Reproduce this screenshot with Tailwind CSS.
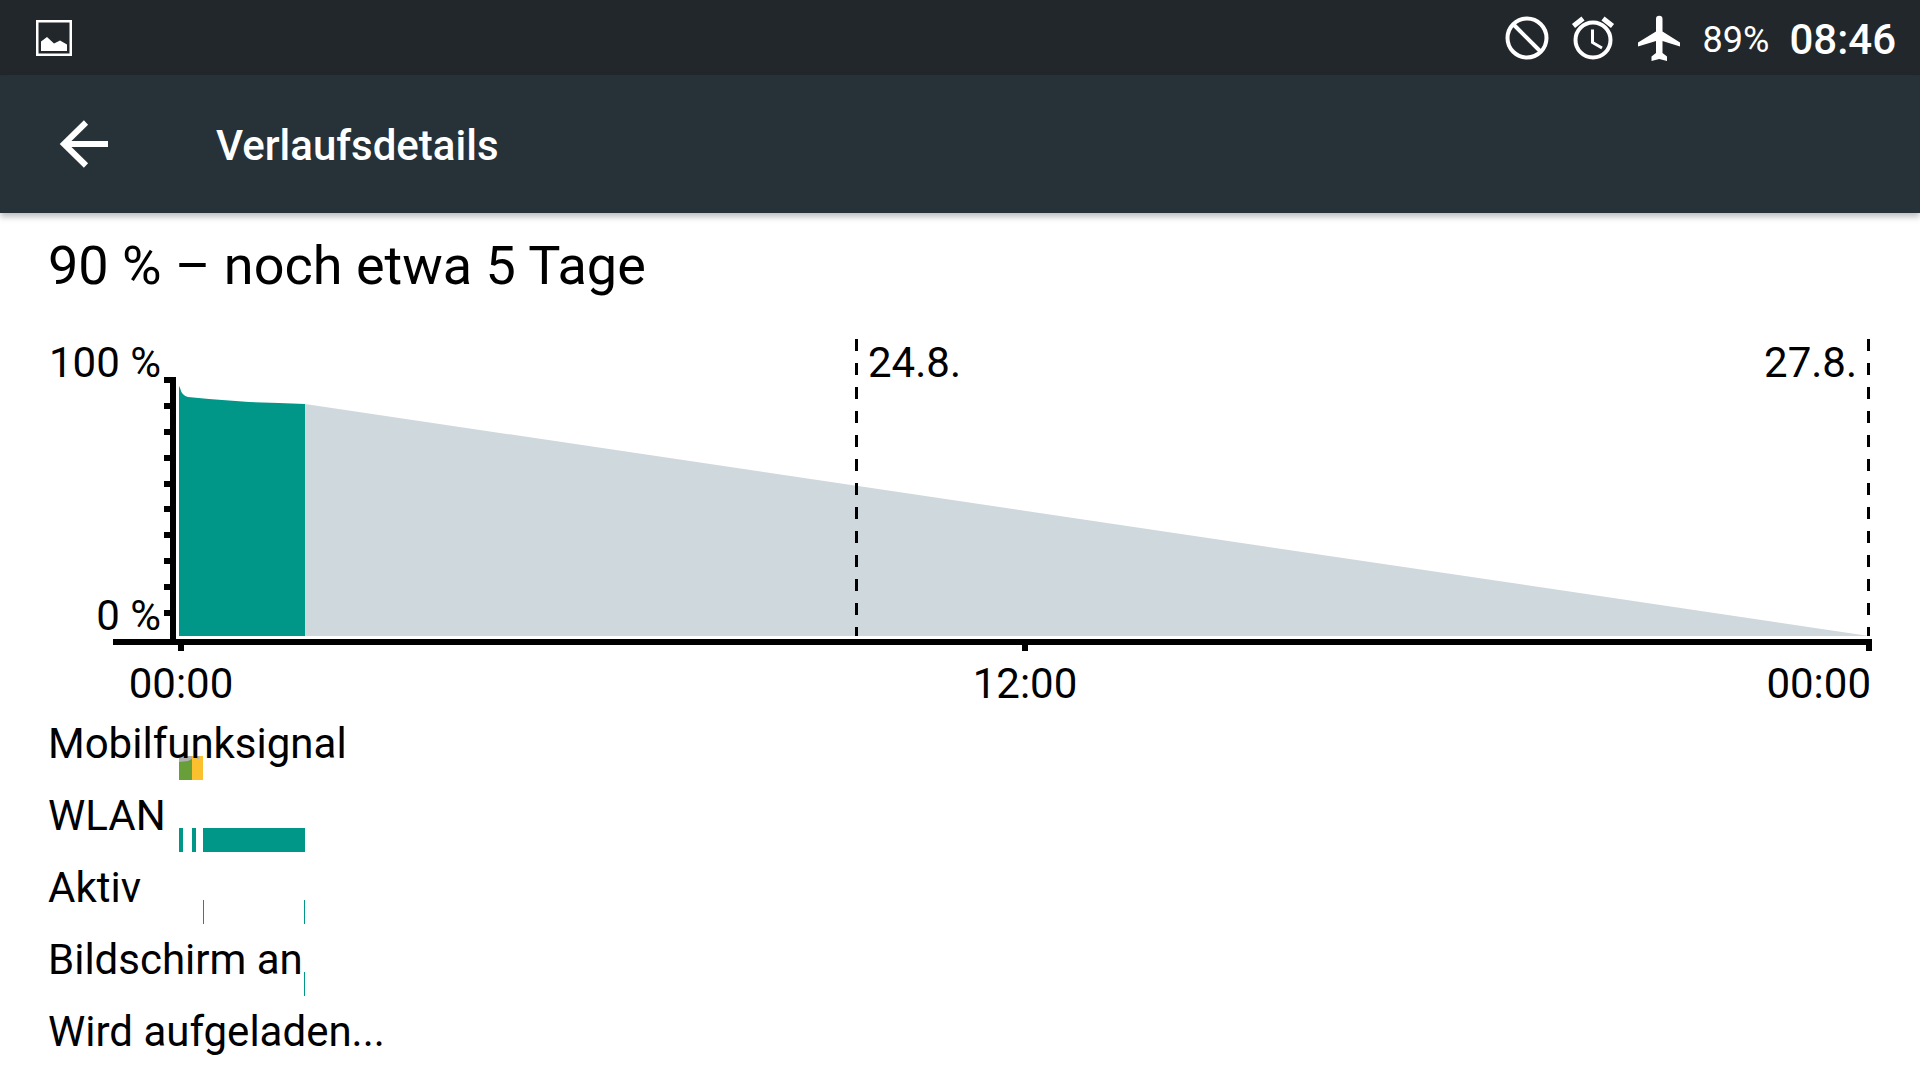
<!DOCTYPE html>
<html lang="de">
<head>
  <meta charset="UTF-8" />
  <meta name="viewport" content="width=device-width, initial-scale=1.0" />
  <title>Verlaufsdetails</title>
  <script src="https://cdn.jsdelivr.net/npm/@tailwindcss/browser@4"></script>
</head>

<body class="min-h-screen bg-white text-black font-[Roboto,sans-serif] text-[42px] leading-[48px]">
  <!-- Statusleiste -->
  <div class="flex h-[75px] items-center justify-between bg-[#22272b] pl-9 pr-6 text-white">
    <svg class="size-9" viewBox="0 0 36 36" fill="currentColor" role="img" aria-label="Screenshot">
      <path d="M1.250 1.250h33.500v33.500h-33.500z" fill="none" stroke="currentColor" stroke-width="2.500" />
      <path d="M5 31V21.500L11 17l7 6.500L24 20.500l7 4V31z" />
    </svg>
    <div class="flex items-center gap-[22px]">
      <svg class="size-11" viewBox="0 0 44 44" fill="none" stroke="currentColor" stroke-width="4" role="img" aria-label="Keine Unterbrechungen">
        <circle cx="22" cy="22" r="19.500" />
        <path d="M9 9l26 26" />
      </svg>
      <svg class="size-11" viewBox="0 0 44 44" fill="none" stroke="currentColor" role="img" aria-label="Wecker">
        <circle cx="22" cy="24" r="17.500" stroke-width="4" />
        <path d="M2.500 10L12 2.500M41.500 10L32 2.500" stroke-width="5" />
        <path d="M21.500 13.500V26.500L31 32" stroke-width="3" />
      </svg>
      <svg class="h-[46px] w-11" viewBox="0 0 44 46" fill="currentColor" role="img" aria-label="Flugmodus">
        <path d="M43 31.500v-4L25.500 16.500V4a3.250 3.250 0 0 0-6.500 0v12.500L1 27.500v4l18-5.500V38l-4.500 3.500V46l7.750-2 7.750 2v-4.500L25.500 38V26z" />
      </svg>
      <div class="flex items-center gap-5 pt-1">
        <span class="text-[36px]">89%</span>
        <span class="font-medium">08:46</span>
      </div>
    </div>
  </div>

  <!-- Titelleiste -->
  <header class="flex h-[138px] items-center bg-[#263238] pl-14 text-white shadow-[0_4px_6px_rgba(0,0,0,0.25)]">
    <button type="button" aria-label="Zurück">
      <svg class="size-14" viewBox="0 0 56 56" fill="none" stroke="currentColor" stroke-width="6">
        <path d="M8 28H52M30 6.500L8 28l22 21.500" />
      </svg>
    </button>
    <h1 class="ml-[104px] pt-1 font-medium">Verlaufsdetails</h1>
  </header>

  <main class="px-12 pt-[21px]">
    <h2 class="text-[54px] leading-[64px]">90 % – noch etwa 5 Tage</h2>

    <!-- Akkuverlauf -->
    <section class="mt-10" aria-label="Akkuverlauf">
      <div class="flex h-[301px]">
        <div class="mt-px -mb-px flex w-[113px] flex-col justify-between text-right whitespace-nowrap">
          <span>100 %</span>
          <span>0 %</span>
        </div>
        <div class="ml-[3px] mt-[39px] flex">
          <div class="flex h-[239px] w-1.5 flex-col justify-between">
            <i class="h-1.5 bg-black"></i>
            <i class="h-1.5 bg-black"></i>
            <i class="h-1.5 bg-black"></i>
            <i class="h-1.5 bg-black"></i>
            <i class="h-1.5 bg-black"></i>
            <i class="h-1.5 bg-black"></i>
            <i class="h-1.5 bg-black"></i>
            <i class="h-1.5 bg-black"></i>
            <i class="h-1.5 bg-black"></i>
            <i class="h-1.5 bg-black"></i>
          </div>
          <div class="w-1.5 bg-black"></div>
        </div>
        <div class="relative mx-[3px] mt-px mb-[3px] flex-1">
          <svg class="size-full" viewBox="0 0 1690 297" preserveAspectRatio="none">
            <path d="M126 65L1690 297H126z" fill="#cfd8dc" />
            <path d="M0 47L1 49Q3 57 9 58L30 60L70 63L100 64L126 65V297H0z" fill="#009688" />
          </svg>
          <div class="absolute inset-y-0 left-[40%] flex gap-[10px]">
            <div class="w-[3px] bg-[repeating-linear-gradient(to_bottom,#000_0_12px,transparent_12px_24px)]"></div>
            <span>24.8.</span>
          </div>
          <div class="absolute inset-y-0 -right-px flex gap-[10px]">
            <span>27.8.</span>
            <div class="w-[3px] bg-[repeating-linear-gradient(to_bottom,#000_0_12px,transparent_12px_24px)]"></div>
          </div>
        </div>
      </div>
      <div class="ml-[65px] h-1.5 bg-black"></div>
      <div class="ml-[130px] flex justify-between">
        <div class="flex w-1.5 flex-col items-center gap-[9px]">
          <i class="h-1.5 w-1.5 bg-black"></i>
          <span>00:00</span>
        </div>
        <div class="flex w-1.5 flex-col items-center gap-[9px]">
          <i class="h-1.5 w-1.5 bg-black"></i>
          <span>12:00</span>
        </div>
        <div class="flex w-1.5 flex-col items-end gap-[9px]">
          <i class="h-1.5 w-1.5 bg-black"></i>
          <span class="pr-px">00:00</span>
        </div>
      </div>
    </section>

    <!-- Ereignisse -->
    <ul class="mt-3">
      <li class="grid h-[72px]">
        <div class="col-start-1 row-start-1 mt-9 ml-[131px] mr-[3px]">
          <svg class="h-6 w-full" viewBox="0 0 1690 24" preserveAspectRatio="none">
            <path d="M0 0h13v24H0z" fill="#689f38" />
            <path d="M13 0h11v24H13z" fill="#fbc02d" />
            <path d="M0 0h13v3l-4 2l-9 1zM17 0h4l-1 3h-2z" fill="#b0b0b0" />
          </svg>
        </div>
        <span class="z-10 col-start-1 row-start-1">Mobilfunksignal</span>
      </li>
      <li class="grid h-[72px]">
        <div class="col-start-1 row-start-1 mt-9 ml-[131px] mr-[3px]">
          <svg class="h-6 w-full" viewBox="0 0 1690 24" preserveAspectRatio="none" fill="#009688">
            <path d="M0 0h4v24H0zM13 0h4v24h-4zM24 0h102v24H24z" />
          </svg>
        </div>
        <span class="z-10 col-start-1 row-start-1">WLAN</span>
      </li>
      <li class="grid h-[72px]">
        <div class="col-start-1 row-start-1 mt-9 ml-[131px] mr-[3px]">
          <svg class="h-6 w-full" viewBox="0 0 1690 24" preserveAspectRatio="none" fill="#009688">
            <path d="M24 0h1v24h-1zM125 0h1v24h-1z" />
          </svg>
        </div>
        <span class="z-10 col-start-1 row-start-1">Aktiv</span>
      </li>
      <li class="grid h-[72px]">
        <div class="col-start-1 row-start-1 mt-9 ml-[131px] mr-[3px]">
          <svg class="h-6 w-full" viewBox="0 0 1690 24" preserveAspectRatio="none" fill="#009688">
            <path d="M125 0h1v24h-1z" />
          </svg>
        </div>
        <span class="z-10 col-start-1 row-start-1">Bildschirm an</span>
      </li>
      <li class="h-[60px]">Wird aufgeladen...</li>
    </ul>
  </main>
</body>
</html>
